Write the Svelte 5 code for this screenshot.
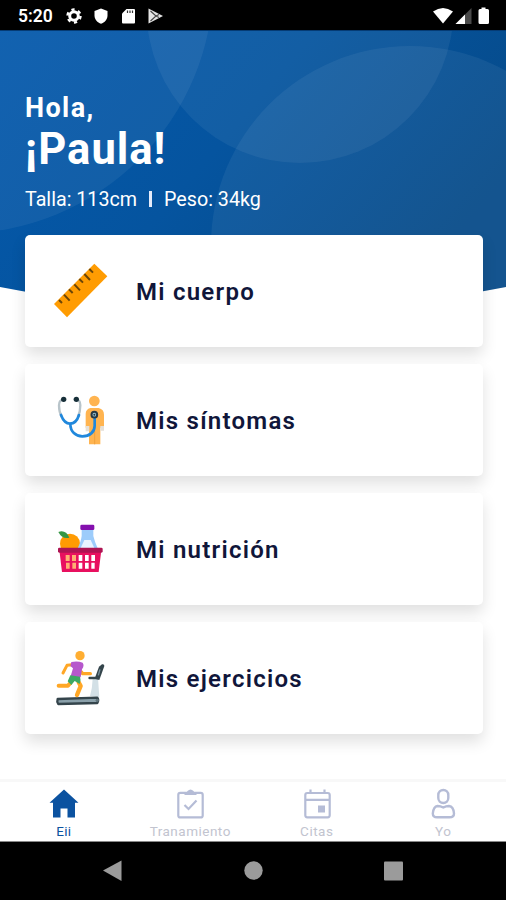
<script>
	let active = $state("home");

	const cards = [
		{ icon: "ruler", title: "Mi cuerpo", viewBox: "0 3 240 240" },
		{ icon: "stethoscope", title: "Mis síntomas", viewBox: "0 0 240 240" },
		{ icon: "basket", title: "Mi nutrición", viewBox: "0 -3 240 240" },
		{ icon: "treadmill", title: "Mis ejercicios", viewBox: "0 -6 240 240" }
	];

	const tabs = [
		{ id: "home", label: "Eii" },
		{ id: "treatment", label: "Tranamiento" },
		{ id: "dates", label: "Citas" },
		{ id: "me", label: "Yo" }
	];
</script>

<div class="phone">
	<div class="status">
		<span class="time">5:20</span>
		<svg class="left-icons" width="96" height="18" viewBox="0 0 96 18">
			<g fill="none" stroke="#fff">
				<circle cx="9" cy="9" r="4.3" stroke-width="3" />
				<circle cx="9" cy="9" r="6.5" stroke-width="2.4" stroke-dasharray="3.2 3.607" />
			</g>
			<path d="M36 1.5 L42.5 4 V8.5 C42.5 12.5 39.5 15.5 36 16.8 C32.5 15.5 29.5 12.5 29.5 8.5 V4Z" fill="#fff" />
			<path d="M61.5 2 H69 Q70 2 70 3 V15.5 Q70 16.5 69 16.5 H58 Q57 16.5 57 15.5 V6.5Z" fill="#fff" />
			<path d="M62.5 3.5v2.5M65 3.5v2.5M67.5 3.5v2.5" stroke="#333" stroke-width="1.2" />
			<path d="M83.5 1.5 L98 9 L83.5 16.5Z" fill="#e4e4e4" />
			<path d="M85.5 4 L91 9 L85.5 14 M91 9 L94 7.5 M91 9 L94 10.5" fill="none" stroke="#444" stroke-width="1.1" />
		</svg>
		<svg class="right-icons" width="60" height="18" viewBox="0 0 60 18">
			<path d="M0 4.5 Q10 -2.5 20 4.5 L10 16.5Z" fill="#fff" />
			<path d="M38.5 1 V17 H22.5Z" fill="#4a4a4a" />
			<path d="M32 7.5 V17 H22.5Z" fill="#fff" />
			<path d="M48.5 2 V.5 h4 V2 H54.5 Q56 2 56 3.5 V15.5 Q56 17 54.5 17 H47 Q45.5 17 45.5 15.5 V3.5 Q45.5 2 47 2Z" fill="#fff" />
		</svg>
	</div>

	<main>
		<svg class="backdrop" width="506" height="285" viewBox="0 30 506 285">
			<defs>
				<linearGradient id="blue" x1="0" y1="0" x2="1" y2="0.5">
					<stop offset="0" stop-color="#0459ac" />
					<stop offset="0.5" stop-color="#05549f" />
					<stop offset="1" stop-color="#064a88" />
				</linearGradient>
				<clipPath id="curve">
					<path d="M0 30 H506 V287 Q253 337 0 287Z" />
				</clipPath>
			</defs>
			<g clip-path="url(#curve)">
				<rect y="30" width="506" height="300" fill="url(#blue)" />
				<g fill="#fff" fill-opacity="0.06">
					<circle cx="-40" cy="-20" r="253.5" />
					<circle cx="300" cy="9.6" r="153.4" />
					<circle cx="410" cy="245" r="199" />
				</g>
				<rect y="30" width="506" height="1" fill="#053b74" />
			</g>
		</svg>

		<header>
			<p class="hello">Hola,</p>
			<h1>¡Paula!</h1>
			<p class="data">
				<span>Talla: 113cm</span>
				<i></i>
				<span>Peso: 34kg</span>
			</p>
		</header>

		<div class="cards">
			{#each cards as card (card.icon)}
				<button class="card">
					<svg width="80" height="80" viewBox={card.viewBox}>
						{#if card.icon === "ruler"}
							<path d="M163 41 L202 79 L81 202 L42 162Z" fill="#ff9c02" />
							<g stroke="#6b4508" stroke-width="6">
								<path d="M57 150l9 9M72 134l17 18M87 118l11 11M103 103l17 18M118 87l11 11M133 72l17 18M148 57l11 11" />
							</g>
						{:else if card.icon === "stethoscope"}
							<circle cx="163" cy="63" r="16" fill="#ffb450" />
							<path d="M151 84 H176 Q192 88 192 104 V143 H181 V193 H147 V143 H137 V102 Q137 88 151 84Z" fill="#ffb450" />
							<path d="M164 153v40" stroke="#f0a23c" stroke-width="3" />
							<path d="M137 138h11v16h-11zM181 138h11v14h-11z" fill="#e5e0d8" />
							<g fill="none" stroke-linecap="round">
								<path d="M70 59 Q57 60 57 76 C57 94 61 103 65 110" stroke="#b8c4ca" stroke-width="7" />
								<path d="M109 59 Q121 60 121 76 C121 92 119 100 114 110" stroke="#b8c4ca" stroke-width="7" />
								<path d="M63 105 C69 121 76 131 90 131 C105 131 112 121 117 105" stroke="#2188dc" stroke-width="8" />
								<path d="M91 132 C91 155 107 169 127 169 C149 169 164 156 164 137 V114" stroke="#2188dc" stroke-width="8" />
							</g>
							<circle cx="71" cy="58" r="8" fill="#172f39" />
							<circle cx="109" cy="58" r="8" fill="#172f39" />
							<circle cx="163" cy="104" r="8.5" fill="#9ac4d4" stroke="#263a45" stroke-width="6" />
							<circle cx="163" cy="104" r="3" fill="#263a45" />
						{:else if card.icon === "basket"}
							<circle cx="90" cy="101" r="30" fill="#ff9b03" />
							<path d="M55 66 Q77 58 88 83 Q67 89 55 66Z" fill="#359744" />
							<path d="M125 55 H160 V78 Q164 96 174 117 H112 Q123 95 125 78Z" fill="#9dccfb" />
							<path d="M133 90 H152 L164 116 H121Z" fill="#e9f4ff" />
							<rect x="121" y="44" width="42" height="16" rx="4" fill="#8410ae" />
							<path d="M58 120 H184 L176 186 H66Z" fill="#e8105f" />
							<rect x="54" y="113" width="134" height="15" rx="4" fill="#ae1453" />
							<g fill="#ffae73">
								<path d="M77 135h12v18H77zM96 135h12v18H96zM78 158h11v18H78zM97 158h11v18H97z" />
							</g>
							<path d="M116 135h11v18h-11zM135 135h11v18h-11zM154 135h11v18h-11zM116 158h11v18h-11zM135 158h11v18h-11zM154 158h10v18h-10z" fill="#fff" />
						{:else}
							<path d="M158 116 L174 114 L178 172 L150 168 Q157 146 158 116Z" fill="#d3e0e6" />
							<path d="M53 177 L172 173 Q177 180 172 189 L55 192 Q50 185 53 177Z" fill="#8aa0aa" stroke="#34444b" stroke-width="7" stroke-linejoin="round" />
							<circle cx="172" cy="181" r="5" fill="#60747c" />
							<path d="M186 73 Q193 71 193 78 L178 120 L164 116 L177 80Z" fill="#34444b" />
							<path d="M180 88l-5 18" stroke="#78909c" stroke-width="4" />
							<path d="M149 114h24" stroke="#34444b" stroke-width="8" stroke-linecap="round" />
							<g fill="none" stroke="#ffa726" stroke-linecap="round" stroke-linejoin="round">
								<path d="M97 74 L81 76 L69 99" stroke-width="9" />
								<path d="M123 95 L128 101 H151" stroke-width="10" />
								<path d="M91 129 L84 137 H56" stroke-width="12" />
								<path d="M116 127 L122 138 L111 165" stroke-width="13" />
							</g>
							<circle cx="120" cy="47" r="14" fill="#ffae32" />
							<path d="M94 66 Q113 62 128 68 Q134 76 126 88 L122 112 H91 L99 85 L91 78Z" fill="#b657cc" />
							<path d="M91 106 L120 110 Q124 121 119 132 L104 123 L94 135 L83 124Z" fill="#3ca963" />
						{/if}
					</svg>
					<span>{card.title}</span>
				</button>
			{/each}
		</div>
	</main>

	<nav>
		{#each tabs as tab (tab.id)}
			<button class="tab" class:active={active === tab.id} onclick={() => (active = tab.id)}>
				<svg width="32" height="32" viewBox="0 0 32 32">
					{#if tab.id === "home"}
						<path d="M16 1.5 L30.5 14.8 H27 V29.5 H19.5 V20.5 H12.5 V29.5 H5 V14.8 H1.5Z" fill="currentColor" />
					{:else if tab.id === "treatment"}
						<g fill="none" stroke="currentColor" stroke-width="2.2">
							<rect x="4.3" y="4.8" width="24.4" height="24.6" rx="2" />
							<path d="M10.5 17 L14.5 21 L22.5 12.5" />
						</g>
						<path d="M10.5 5.5 Q13 5 13.5 3 Q16.5 -.2 19.5 3 Q20 5 22.5 5.5 V7 H10.5Z" fill="currentColor" />
					{:else if tab.id === "dates"}
						<g fill="none" stroke="currentColor" stroke-width="2.2">
							<rect x="4.3" y="5" width="24.4" height="24.3" rx="2" />
							<path d="M4 11.8H29M9.5 1.5V6M23.5 1.5V6" />
						</g>
						<rect x="17" y="17.5" width="7" height="7" fill="currentColor" />
					{:else}
						<g fill="none" stroke="currentColor" stroke-width="2.4">
							<rect x="11.3" y="2" width="10" height="13" rx="5" />
							<path d="M10.5 18 Q13.5 18 16.3 19.5 Q19 18 22 18 Q26.5 18.5 27 25.5 Q27 29.3 22.5 29.3 H10 Q5.8 29.3 5.8 25.5 Q6.5 18.5 10.5 18Z" />
						</g>
					{/if}
				</svg>
				<span>{tab.label}</span>
			</button>
		{/each}
	</nav>

	<div class="system">
		<svg width="506" height="58" viewBox="0 842 506 58" fill="#9b9b9b">
			<path d="M103 870.5 L121.5 860.5 V881Z" />
			<circle cx="253.5" cy="870.5" r="9.2" />
			<rect x="384" y="861.5" width="19" height="19" rx="1" />
		</svg>
	</div>
</div>

<style>
	:global(body) {
		margin: 0;
		background: #fff;
	}
	.phone {
		width: 506px;
		height: 900px;
		display: flex;
		flex-direction: column;
		overflow: hidden;
		font-family: Roboto, "Liberation Sans", sans-serif;
		background: #fff;
	}
	p,
	h1 {
		margin: 0;
	}
	button {
		border: none;
		padding: 0;
		background: none;
		font-family: inherit;
		cursor: pointer;
	}
	.status {
		flex: none;
		height: 30px;
		box-sizing: border-box;
		padding: 1px 15px 0 18px;
		display: flex;
		align-items: center;
		background: #000;
		color: #fff;
	}
	.time {
		width: 47px;
		font-size: 17.5px;
		font-weight: 600;
	}
	.left-icons,
	.right-icons {
		overflow: visible;
	}
	.right-icons {
		margin-left: auto;
		margin-right: -2px;
	}
	main {
		flex: 1;
		position: relative;
		display: flex;
		flex-direction: column;
	}
	.backdrop {
		position: absolute;
		top: 0;
		left: 0;
	}
	header {
		position: relative;
		height: 205px;
		box-sizing: border-box;
		padding: 62px 25px 0;
		color: #fff;
	}
	.hello {
		font-size: 27px;
		line-height: 33px;
		font-weight: 700;
		letter-spacing: 1.4px;
	}
	h1 {
		font-size: 43.5px;
		line-height: 50px;
		font-weight: 700;
		letter-spacing: 1px;
	}
	.data {
		display: flex;
		align-items: center;
		margin-top: 13px;
		font-size: 19.7px;
		line-height: 24px;
	}
	.data i {
		width: 3px;
		height: 16px;
		margin: -3px 12px 0;
		background: #e6ecfa;
	}
	.cards {
		position: relative;
		display: flex;
		flex-direction: column;
		gap: 17px;
		padding: 0 23px 0 25px;
	}
	.card {
		height: 112px;
		display: flex;
		align-items: center;
		gap: 16px;
		padding: 2px 0 0 15px;
		border-radius: 5px;
		background: #fff;
		box-shadow: 0 8px 15px rgba(0, 0, 0, 0.12);
		color: #10163a;
		font-size: 24px;
		font-weight: 600;
		letter-spacing: 1.25px;
	}
	.card svg {
		margin-top: -2px;
	}
	nav {
		flex: none;
		height: 63px;
		box-sizing: border-box;
		display: grid;
		grid-template-columns: repeat(4, 1fr);
		border-top: 3px solid #f8f8f8;
		border-bottom: 1px solid #888;
	}
	.tab {
		display: flex;
		flex-direction: column;
		align-items: center;
		padding: 6px 0 0 1px;
		color: #b5bcd6;
		font-size: 13.5px;
		line-height: 16px;
	}
	.tab span {
		margin-top: 3px;
		color: #c2c4cf;
		letter-spacing: 0.5px;
	}
	.tab.active span {
		letter-spacing: 0.2px;
	}
	.tab.active,
	.tab.active span {
		color: #0b52a0;
	}
	.system {
		flex: none;
		height: 58px;
		background: #000;
	}
</style>
